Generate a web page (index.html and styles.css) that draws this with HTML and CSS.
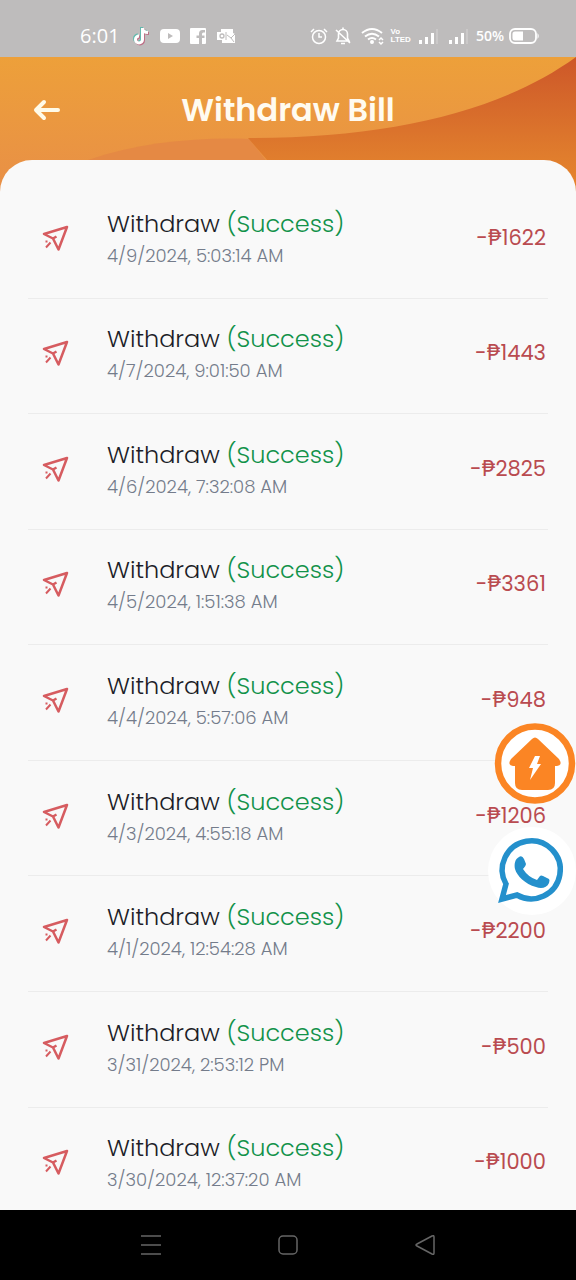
FILE: index.html
```
<!DOCTYPE html>
<html lang="en">
<head>
<meta charset="utf-8">
<meta name="viewport" content="width=device-width, initial-scale=1">
<title>Withdraw Bill</title>
<link rel="stylesheet" href="styles.css">
</head>
<body>
<svg class="defs" aria-hidden="true">
  <symbol id="plane" viewBox="0 0 28 28">
    <path d="M25 3 2 10 11 14.500 16.500 25.500ZM11 14.500 14.500 12.500"/>
    <path d="M3.500 17.500H5.500M8.500 18.500 4 23.500" stroke-width="2"/>
  </symbol>
</svg>

<div class="status">
  <div class="status-left">
    <span class="clock">6:01</span>
    <svg class="ic20" viewBox="0 0 20 20" aria-hidden="true">
      <g fill="none" stroke-width="3"><path d="M10.500 2V13.500A3.500 3.500 0 1 1 7 10M10.500 2.500C11 5 13 6.500 16 6.500" stroke="#63b9ad" transform="translate(-1 -1)"/><path d="M10.500 2V13.500A3.500 3.500 0 1 1 7 10M10.500 2.500C11 5 13 6.500 16 6.500" stroke="#bd6f86" transform="translate(1 1)"/><path d="M10.500 2V13.500A3.500 3.500 0 1 1 7 10M10.500 2.500C11 5 13 6.500 16 6.500" stroke="#fff"/></g>
    </svg>
    <svg class="ic20" viewBox="0 0 20 20" aria-hidden="true"><path fill="#fff" fill-rule="evenodd" d="M4 3H16Q20 3 20 7V13Q20 17 16 17H4Q0 17 0 13V7Q0 3 4 3ZM8 7V13L13 10Z"/></svg>
    <svg class="ic20" viewBox="0 0 20 20" aria-hidden="true"><path fill="#fff" fill-rule="evenodd" d="M3 2H17Q18 2 18 3V17Q18 18 17 18H14V12H16.500V9.500H14V8Q14 6.500 15.500 6.500H17V4H14.500Q11 4 11 7.500V9.500H8.500V12H11V18H3Q2 18 2 17V3Q2 2 3 2Z"/></svg>
    <svg class="ic20" viewBox="0 0 20 20" aria-hidden="true"><path fill="#fff" d="M5 3H17V7L19 8V17H6V14H1V6H5Z"/><circle cx="6" cy="10" r="2" fill="none" stroke="#bebcbc" stroke-width="1.300"/><path d="M10 6V14M11 9 15 12 19 8M15 12 18 16" fill="none" stroke="#bebcbc"/></svg>
  </div>
  <div class="status-right">
    <svg class="ic20" viewBox="0 0 20 20" fill="none" stroke="#fff" stroke-width="1.500" aria-hidden="true"><circle cx="10" cy="11" r="6.500"/><path d="M10 7V11H13M2 6 5 3M18 6 15 3"/></svg>
    <svg class="ic20" viewBox="0 0 20 20" fill="none" stroke="#fff" stroke-width="1.600" aria-hidden="true"><path d="M4 15H16L14.500 12V8A4.500 4.500 0 0 0 5.500 8V12ZM10 1.500V4M8 17.500H12M3 4 17 17"/></svg>
    <svg class="wifi" viewBox="0 0 24 20" fill="none" stroke="#fff" stroke-width="2" aria-hidden="true"><path d="M1 7Q11-1 21 7M4 10.500Q11 5 18 10.500M7 13.500Q11 10.500 15 13.500"/><circle cx="11" cy="16" r="1" fill="#fff"/><path d="M18 14 20 12 22 14M18 16 20 18 22 16" stroke-width="1.500"/></svg>
    <span class="volte"><span>Vo</span><span>LTED</span></span>
    <svg class="bars" viewBox="0 0 20 20" fill="#fff" aria-hidden="true"><path d="M0 14H3V18H0ZM6 11H9V18H6ZM12 7H15V18H12Z"/><path opacity=".2" d="M17 3H19V18H17Z"/></svg>
    <svg class="bars second" viewBox="0 0 20 20" fill="#fff" aria-hidden="true"><path d="M0 14H3V18H0ZM6 11H9V18H6ZM12 7H15V18H12Z"/><path opacity=".2" d="M17 3H19V18H17Z"/></svg>
    <span class="percent">50%</span>
    <svg class="battery" viewBox="0 0 31 18" aria-hidden="true"><rect x="1" y="2" width="26" height="14" rx="5" fill="none" stroke="#fff" stroke-width="1.800"/><path d="M6 4.500H14V13.500H6Q3.500 13.500 3.500 11V7Q3.500 4.500 6 4.500ZM28.500 6Q31 9 28.500 12Z" fill="#fff"/></svg>
  </div>
</div>

<header class="header">
  <svg class="wave" viewBox="0 0 576 143" preserveAspectRatio="none" aria-hidden="true">
    <defs>
      <linearGradient id="base" x1="0" y1="0" x2="0" y2="1"><stop offset="0" stop-color="#eda03a"/><stop offset="1" stop-color="#e88e47"/></linearGradient>
      <linearGradient id="deep" x1="0" y1="0" x2="0" y2="1"><stop offset="0" stop-color="#cd5729"/><stop offset=".7" stop-color="#e07d2d"/><stop offset="1" stop-color="#e8872b"/></linearGradient>
    </defs>
    <path fill="url(#base)" d="M0 0H576V143H0Z"/>
    <path fill="#e58944" d="M88 103C140 85 200 80 249 82L268 106H82Z"/>
    <path fill="url(#deep)" d="M576 0V143H300L268 104 248 81C390 81 500 55 576 0Z"/>
  </svg>
  <button class="back" type="button" aria-label="Back">
    <svg viewBox="0 0 28 22" aria-hidden="true"><path d="M26 11H4M12 3 4 11 12 19" fill="none" stroke="#fffbe8" stroke-width="4" stroke-linecap="round" stroke-linejoin="round"/></svg>
  </button>
  <h1>Withdraw Bill</h1>
</header>

<main class="sheet">
  <ul class="bills">
    <li class="bill"><svg class="plane" aria-hidden="true"><use href="#plane"/></svg><div class="info"><p class="title">Withdraw <span class="ok">(Success)</span></p><time>4/9/2024, 5:03:14 AM</time></div><span class="amount">-₱1622</span></li>
    <li class="bill"><svg class="plane" aria-hidden="true"><use href="#plane"/></svg><div class="info"><p class="title">Withdraw <span class="ok">(Success)</span></p><time>4/7/2024, 9:01:50 AM</time></div><span class="amount">-₱1443</span></li>
    <li class="bill"><svg class="plane" aria-hidden="true"><use href="#plane"/></svg><div class="info"><p class="title">Withdraw <span class="ok">(Success)</span></p><time>4/6/2024, 7:32:08 AM</time></div><span class="amount">-₱2825</span></li>
    <li class="bill"><svg class="plane" aria-hidden="true"><use href="#plane"/></svg><div class="info"><p class="title">Withdraw <span class="ok">(Success)</span></p><time>4/5/2024, 1:51:38 AM</time></div><span class="amount">-₱3361</span></li>
    <li class="bill"><svg class="plane" aria-hidden="true"><use href="#plane"/></svg><div class="info"><p class="title">Withdraw <span class="ok">(Success)</span></p><time>4/4/2024, 5:57:06 AM</time></div><span class="amount">-₱948</span></li>
    <li class="bill"><svg class="plane" aria-hidden="true"><use href="#plane"/></svg><div class="info"><p class="title">Withdraw <span class="ok">(Success)</span></p><time>4/3/2024, 4:55:18 AM</time></div><span class="amount">-₱1206</span></li>
    <li class="bill"><svg class="plane" aria-hidden="true"><use href="#plane"/></svg><div class="info"><p class="title">Withdraw <span class="ok">(Success)</span></p><time>4/1/2024, 12:54:28 AM</time></div><span class="amount">-₱2200</span></li>
    <li class="bill"><svg class="plane" aria-hidden="true"><use href="#plane"/></svg><div class="info"><p class="title">Withdraw <span class="ok">(Success)</span></p><time>3/31/2024, 2:53:12 PM</time></div><span class="amount">-₱500</span></li>
    <li class="bill"><svg class="plane" aria-hidden="true"><use href="#plane"/></svg><div class="info"><p class="title">Withdraw <span class="ok">(Success)</span></p><time>3/30/2024, 12:37:20 AM</time></div><span class="amount">-₱1000</span></li>
  </ul>
</main>

<div class="floating">
  <button class="home" type="button" aria-label="Home">
    <svg viewBox="0 0 82 82" aria-hidden="true">
      <circle cx="41" cy="41.500" r="37" fill="#fff" stroke="#fb8524" stroke-width="6.500"/>
      <path d="M38 17Q41 14 44 17L65 37Q69 43 63 44H61V61Q61 68 54 68H28Q21 68 21 61V44H19Q13 43 17 37Z" fill="#fb8524"/>
      <path d="M41 34H46L43 42H47L36 58 39 46H35Z" fill="#fff"/>
    </svg>
  </button>
  <button class="chat" type="button" aria-label="WhatsApp chat">
    <svg viewBox="0 0 88 88" aria-hidden="true">
      <circle cx="44" cy="44" r="44" fill="#fff"/>
      <path d="M14 72 18 57A29 29 0 1 1 29 68Z" fill="none" stroke="#2490cc" stroke-width="5.500"/>
      <path d="M31 30Q34 28 36 32L38 37Q38 39 35 42Q40 50 49 53L52 49Q53 48 55 49L61 52Q62 53 61 56C59 61 53 62 48 60C37 57 29 49 27 42C26 37 27 32 31 30Z" fill="#2490cc"/>
    </svg>
  </button>
</div>

<nav class="navbar" aria-label="System">
  <button type="button" aria-label="Recent apps"><svg viewBox="0 0 22 22"><path d="M1 2H21M1 11H21M1 20H21"/></svg></button>
  <button type="button" aria-label="Home screen"><svg viewBox="0 0 22 22"><rect x="2" y="2" width="18" height="18" rx="4"/></svg></button>
  <button type="button" aria-label="Go back"><svg viewBox="0 0 22 22"><path d="M18 2Q20 1 20 3V19Q20 21 18 20L3 12Q1 11 3 10Z"/></svg></button>
</nav>
</body>
</html>
```
FILE: styles.css
```
* { box-sizing: border-box; }

body {
  margin: 0;
  min-height: 100vh;
  display: flex;
  flex-direction: column;
  background: #f9f9f9;
  font-family: Poppins, Inter, "Noto Sans", sans-serif;
}

button {
  padding: 0;
  border: 0;
  background: none;
}

svg { display: block; flex: none; }

.defs {
  position: absolute;
  width: 0;
  height: 0;
}

.status {
  height: 57px;
  padding: 16px 36px 0 80px;
  display: flex;
  justify-content: space-between;
  background: #bebcbc;
  color: #fff;
}

.status-left,
.status-right {
  height: 40px;
  display: flex;
  align-items: center;
}

.status-left { gap: 8px; }
.status-right { gap: 4px; }

.clock {
  margin-right: 4px;
  font: 20px/24px "Open Sans", sans-serif;
}

.ic20 { width: 20px; height: 20px; }
.wifi { width: 24px; height: 20px; margin-left: 4px; }
.bars { width: 20px; height: 20px; margin-left: 4px; }
.second { margin-left: 6px; }
.battery { width: 31px; height: 18px; }

.volte {
  display: flex;
  flex-direction: column;
  margin-left: 2px;
  font: bold 8px/8px "Liberation Sans", sans-serif;
}

.percent {
  margin: 0 1px 0 3px;
  font: 600 14px/20px "Open Sans", sans-serif;
}

.header {
  position: relative;
  height: 103px;
  padding: 3px 32px 0;
  display: grid;
  grid-template-columns: 28px 1fr 28px;
  align-items: center;
}

.wave {
  position: absolute;
  top: 0;
  left: 0;
  width: 100%;
  height: 143px;
}

.back {
  position: relative;
  width: 28px;
  height: 22px;
}

.back svg { width: 28px; height: 22px; }

.header h1 {
  position: relative;
  margin: 0;
  color: #fffbf0;
  font-size: 32px;
  line-height: 40px;
  font-weight: 600;
  text-align: center;
}

.sheet {
  position: relative;
  flex: 1;
  display: flex;
  flex-direction: column;
  padding: 23px 28px 0;
  overflow: hidden;
  border-radius: 32px 32px 0 0;
  background: #f9f9f9;
}

.bills {
  flex: 1;
  display: flex;
  flex-direction: column;
  margin: 0 0 -13px;
  padding: 0;
  list-style: none;
}

.bill {
  flex: 1;
  display: flex;
  align-items: center;
  padding: 0 2px 5px 14px;
  border-bottom: 1px solid #ececec;
}

.plane {
  width: 28px;
  height: 28px;
  margin-right: 37px;
  fill: none;
  stroke: #d65c60;
  stroke-width: 2.5;
  stroke-linejoin: round;
}

.info {
  flex: 1;
  padding-top: 2px;
}

.title {
  margin: 0;
  color: #1c1d28;
  font-size: 24px;
  font-weight: 300;
  line-height: 34px;
}

.ok { color: #12924a; }

time {
  display: block;
  color: #747c8b;
  font-size: 18px;
  font-weight: 300;
  line-height: 30px;
}

.amount {
  color: #b94b50;
  font-size: 21px;
  line-height: 32px;
}

.floating {
  position: fixed;
  top: 722px;
  right: 0;
  display: flex;
  flex-direction: column;
  align-items: flex-end;
  gap: 23px;
}

.home, .home svg { width: 82px; height: 82px; }
.chat, .chat svg { width: 88px; height: 88px; }

.navbar {
  height: 70px;
  padding: 0 82px;
  display: flex;
  justify-content: space-around;
  align-items: center;
  background: #000;
}

.navbar svg {
  width: 22px;
  height: 22px;
  fill: none;
  stroke: #666;
  stroke-width: 1.5;
}
```
